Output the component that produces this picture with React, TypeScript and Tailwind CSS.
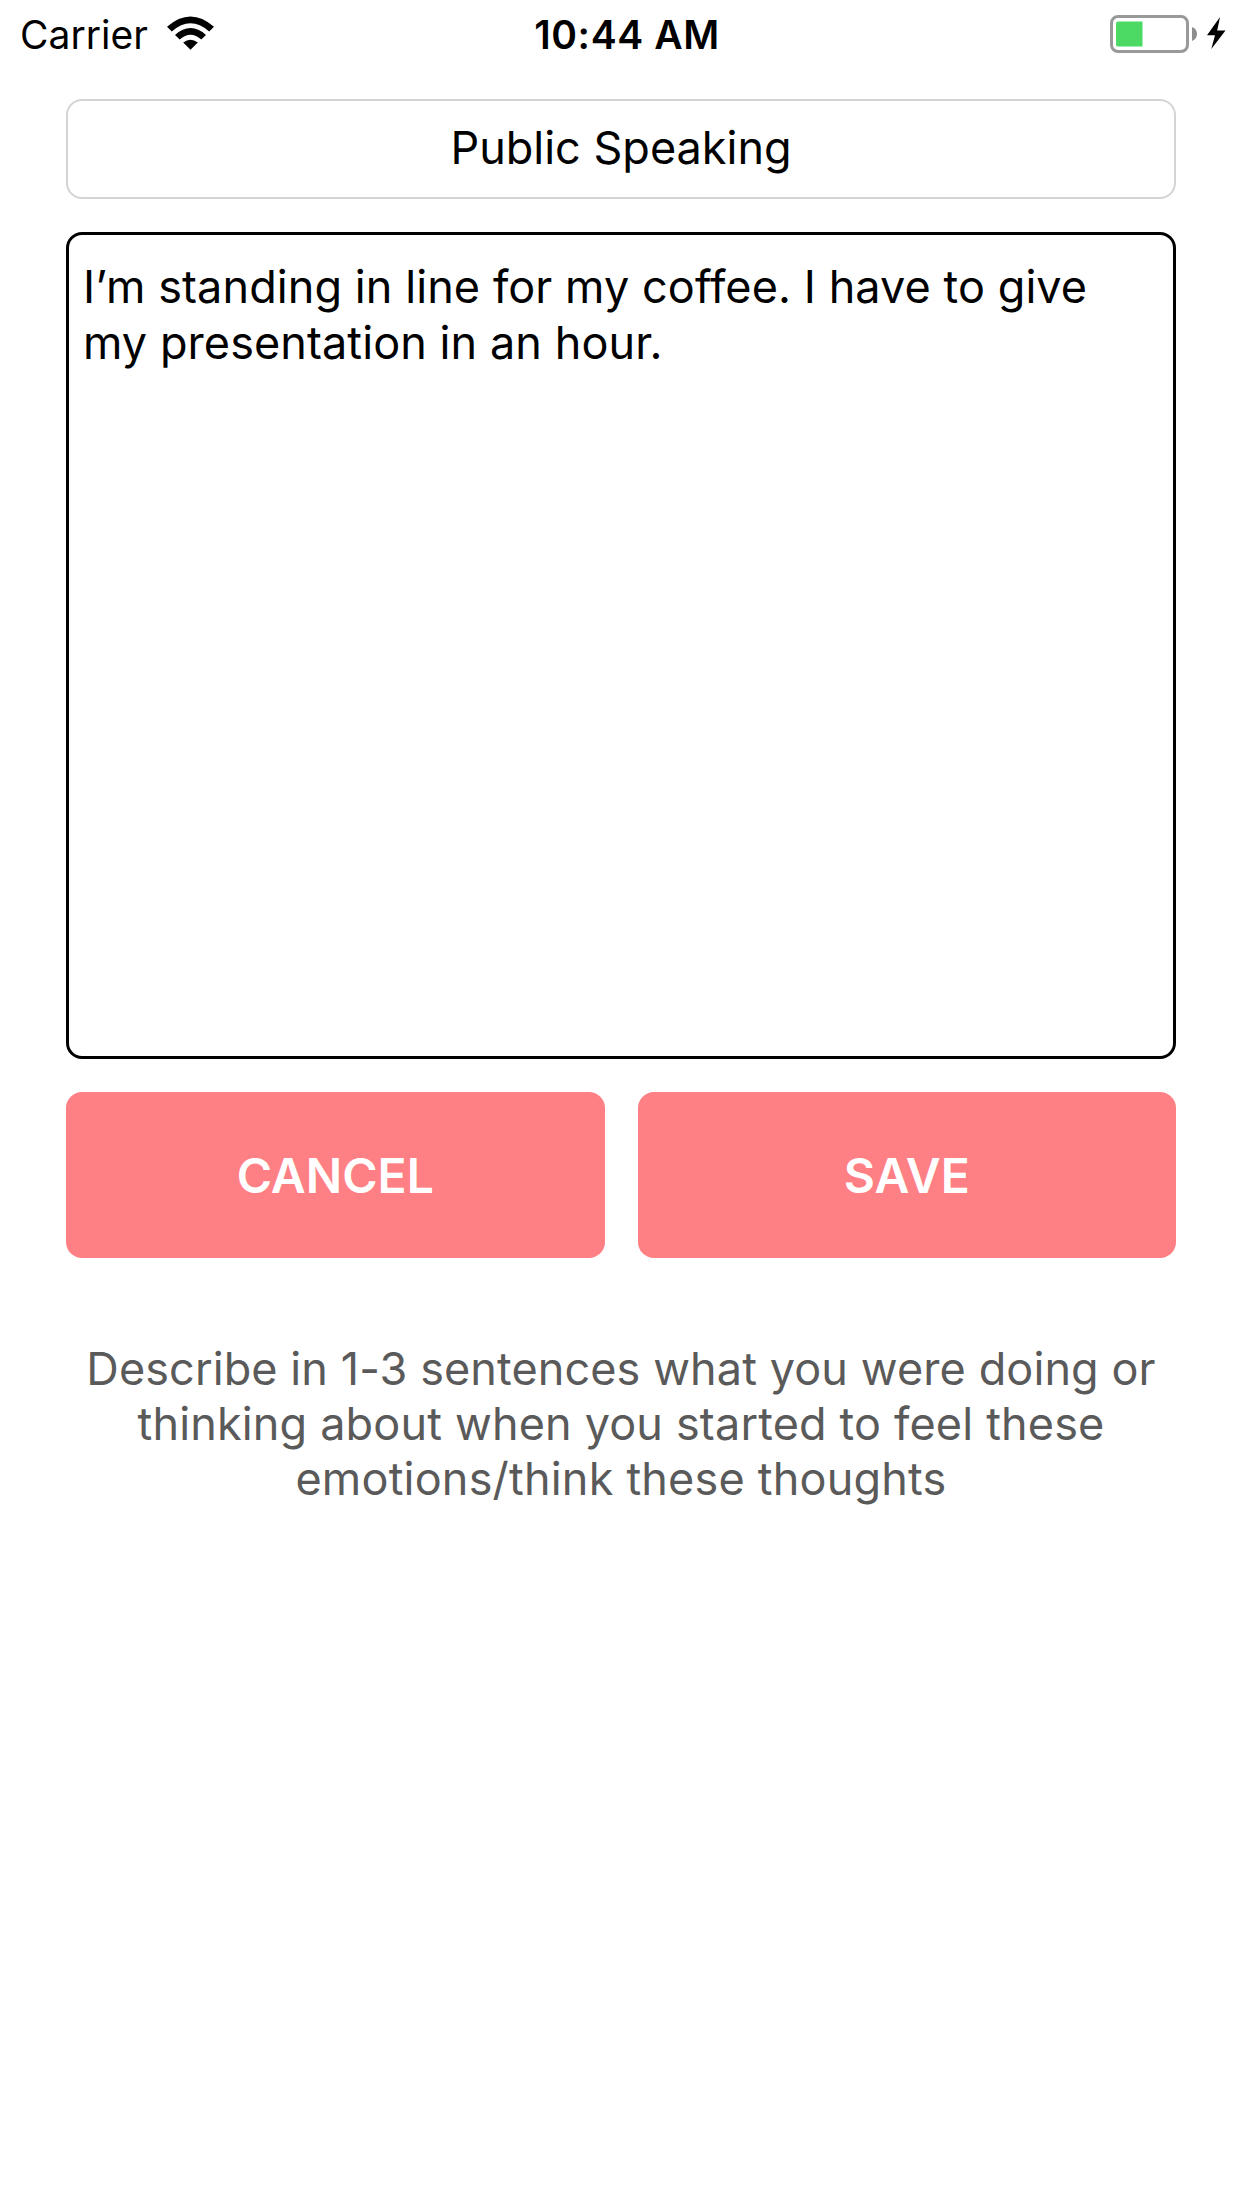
import React from "react";

export default function App() {
  return (
    <main className="flex h-[2208px] w-[1242px] flex-col bg-white font-['Inter','Liberation_Sans',sans-serif] text-black">
      <header className="flex h-[68px] items-center justify-between pl-[20px] pr-[16px]">
        <div className="flex w-[510px] items-center">
          <span className="w-[147px] pt-px text-[39px] leading-[46px]">Carrier</span>
          <svg width="47" height="34" viewBox="0 0 47 34" className="mt-[-2px]">
            <path d="M23.5 33.7 L16.2 26.6 Q23.5 21 30.8 26.6 Z" />
            <path d="M8 18.9 Q23.5 5.2 39 18.9 L34.3 23.6 Q23.5 14 12.7 23.6 Z" />
            <path d="M0 10.7 Q23.5 -9.8 47 10.7 L42.2 15.5 Q23.5 -1 4.8 15.5 Z" />
          </svg>
        </div>
        <span className="pt-px text-[39px] font-semibold leading-[46px] tracking-[0.6px]">10:44 AM</span>
        <div className="flex w-[502px] items-center justify-end">
          <svg width="116" height="38" viewBox="0 0 116 38">
            <rect x="1.5" y="1.5" width="76" height="35" rx="6.5" fill="none" stroke="#999" strokeWidth="3" />
            <path d="M6 8.5 Q6 6.5 8 6.5 H32.5 V31.5 H8 Q6 31.5 6 29.5 Z" fill="#4cd964" />
            <path d="M82 12 Q87 14 87 19 Q87 24 82 26 Z" fill="#8e8e8e" />
            <path d="M110 2 L97 20.2 H105 L101.3 34 L115.5 15.6 H107.2 Z" />
          </svg>
        </div>
      </header>
      <section className="mx-[66px] mt-[31px] flex flex-col">
        <div className="h-[100px] rounded-[16px] border-2 border-[#d4d4d4] text-center text-[45px] leading-[94px]">Public Speaking</div>
        <div className="mt-[33px] h-[827px] rounded-[16px] border-[3px] border-black pl-[14px] pt-[24px] text-[45px] leading-[56px] tracking-[0.08px]">
          <p>I’m standing in line for my coffee. I have to give</p>
          <p>my presentation in an hour.</p>
        </div>
        <div className="mt-[33px] grid grid-cols-2 gap-[33px] text-[48px] font-semibold text-white">
          <button className="h-[166px] rounded-[16px] bg-[#ff8084] pt-[2px]">CANCEL</button>
          <button className="h-[166px] rounded-[16px] bg-[#ff8084] pt-[2px]">SAVE</button>
        </div>
        <div className="mt-[83px] text-center text-[45px] leading-[55px] tracking-[0.1px] text-[#5a5a5a]">
          <p>Describe in 1-3 sentences what you were doing or</p>
          <p className="tracking-[0.16px]">thinking about when you started to feel these</p>
          <p className="tracking-[0.2px]">emotions/think these thoughts</p>
        </div>
      </section>
    </main>
  );
}
